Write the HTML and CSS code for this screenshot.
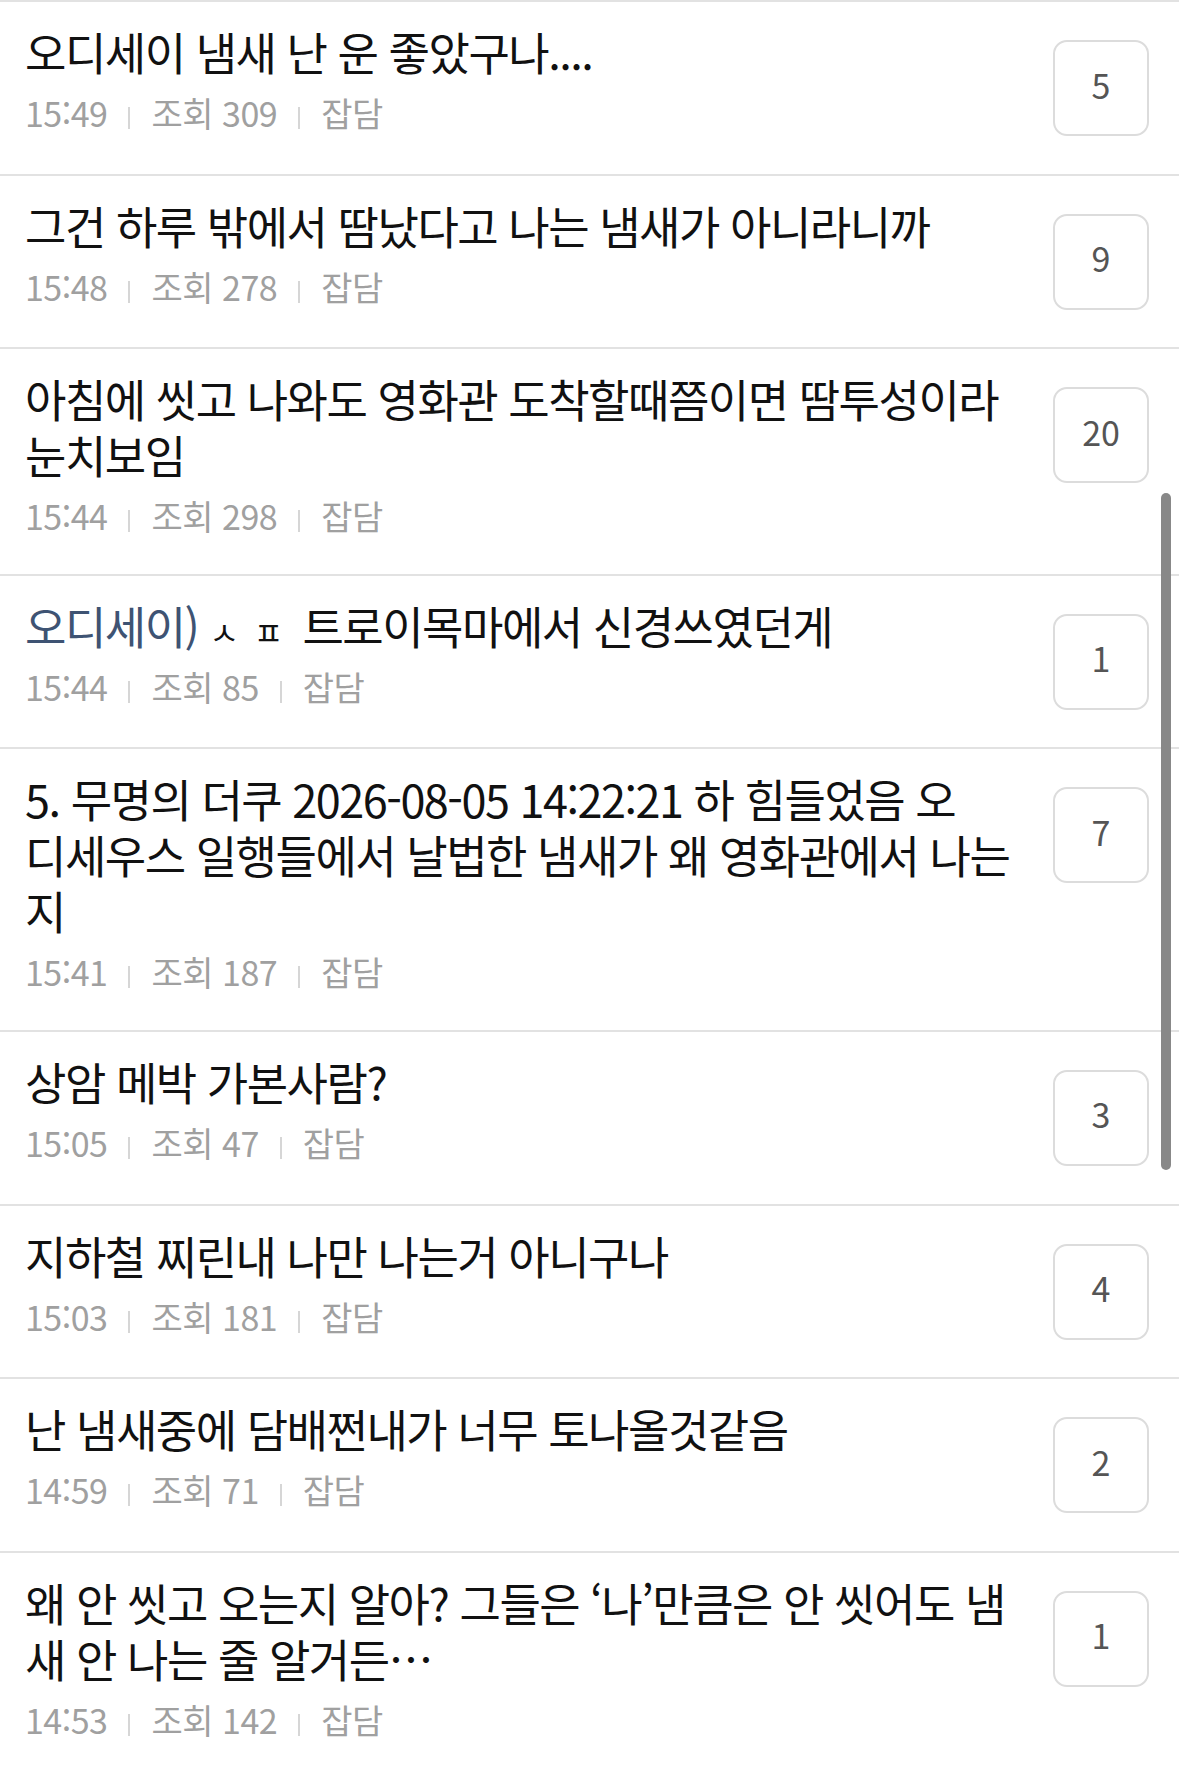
FILE: index.html
```html
<!DOCTYPE html>
<html lang="ko">
<head>
  <meta charset="UTF-8" />
  <meta name="viewport" content="width=device-width, initial-scale=1.0"/>
  <title>잡담</title>
  <link rel="stylesheet" href="styles.css">
</head>
<body>
  <ul class="list">
    <li class="item">
      <div class="info">
        <p class="title">오디세이 냄새 난 운 좋았구나....</p>
        <p class="meta"><span>15:49</span><span class="bar"></span><span>조회 309</span><span class="bar"></span><span>잡담</span></p>
      </div>
      <span class="count">5</span>
    </li>
    <li class="item">
      <div class="info">
        <p class="title">그건 하루 밖에서 땀났다고 나는 냄새가 아니라니까</p>
        <p class="meta"><span>15:48</span><span class="bar"></span><span>조회 278</span><span class="bar"></span><span>잡담</span></p>
      </div>
      <span class="count">9</span>
    </li>
    <li class="item">
      <div class="info">
        <p class="title">아침에 씻고 나와도 영화관 도착할때쯤이면 땀투성이라<br>눈치보임</p>
        <p class="meta"><span>15:44</span><span class="bar"></span><span>조회 298</span><span class="bar"></span><span>잡담</span></p>
      </div>
      <span class="count">20</span>
    </li>
    <li class="item">
      <div class="info">
        <p class="title"><span class="tag">오디세이)</span> <span class="jamo">ㅅㅍ</span> 트로이목마에서 신경쓰였던게</p>
        <p class="meta"><span>15:44</span><span class="bar"></span><span>조회 85</span><span class="bar"></span><span>잡담</span></p>
      </div>
      <span class="count">1</span>
    </li>
    <li class="item">
      <div class="info">
        <p class="title">5. 무명의 더쿠 2026-08-05 14:22:21 하 힘들었음 오<br>디세우스 일행들에서 날법한 냄새가 왜 영화관에서 나는<br>지</p>
        <p class="meta"><span>15:41</span><span class="bar"></span><span>조회 187</span><span class="bar"></span><span>잡담</span></p>
      </div>
      <span class="count">7</span>
    </li>
    <li class="item">
      <div class="info">
        <p class="title">상암 메박 가본사람?</p>
        <p class="meta"><span>15:05</span><span class="bar"></span><span>조회 47</span><span class="bar"></span><span>잡담</span></p>
      </div>
      <span class="count">3</span>
    </li>
    <li class="item">
      <div class="info">
        <p class="title">지하철 찌린내 나만 나는거 아니구나</p>
        <p class="meta"><span>15:03</span><span class="bar"></span><span>조회 181</span><span class="bar"></span><span>잡담</span></p>
      </div>
      <span class="count">4</span>
    </li>
    <li class="item">
      <div class="info">
        <p class="title">난 냄새중에 담배쩐내가 너무 토나올것같음</p>
        <p class="meta"><span>14:59</span><span class="bar"></span><span>조회 71</span><span class="bar"></span><span>잡담</span></p>
      </div>
      <span class="count">2</span>
    </li>
    <li class="item">
      <div class="info">
        <p class="title">왜 안 씻고 오는지 알아? 그들은 ‘나’만큼은 안 씻어도 냄<br>새 안 나는 줄 알거든…</p>
        <p class="meta"><span>14:53</span><span class="bar"></span><span>조회 142</span><span class="bar"></span><span>잡담</span></p>
      </div>
      <span class="count">1</span>
    </li>
  </ul>

  <div class="scrollbar"></div>
</body>
</html>
```

FILE: styles.css
```css
body {
  font-family: "Noto Sans CJK KR", "Noto Sans", sans-serif;
  margin: 0;
  background: #fff;
  height: 1777px;
  overflow: hidden;
  position: relative;
}
.list {
  list-style: none;
  margin: 0;
  padding: 0;
  border-top: 2px solid #e2e2e2;
}
.item {
  display: flex;
  align-items: flex-start;
  padding: 22px 30px 37.6px 25px;
  border-bottom: 2px solid #e2e2e2;
}
.info {
  flex: 1;
  min-width: 0;
}
.title {
  margin: 0;
  font-size: 45px;
  line-height: 56px;
  letter-spacing: -1.5px;
  color: #111;
  white-space: nowrap;
}
.tag {
  color: #3e5373;
}
.jamo {
  font-size: 32px;
  line-height: 1;
  letter-spacing: 15px;
  margin-right: -7px;
}
.meta {
  margin: 13px 0 0;
  display: flex;
  align-items: center;
  font-size: 34px;
  line-height: 40px;
  letter-spacing: -0.5px;
  color: #a0a0a0;
}
.bar {
  width: 2px;
  height: 22px;
  margin: 10px 21px 0;
  background: #d6d6d6;
}
.count {
  flex-shrink: 0;
  box-sizing: border-box;
  width: 96px;
  height: 96px;
  margin: 16px 0 0 38px;
  padding-bottom: 8px;
  border: 2px solid #dcdcdc;
  border-radius: 14px;
  display: flex;
  align-items: center;
  justify-content: center;
  font-size: 34px;
  color: #555;
}
.scrollbar {
  position: absolute;
  top: 493px;
  right: 8px;
  width: 10px;
  height: 677px;
  border-radius: 5px;
  background: #888;
}
```
